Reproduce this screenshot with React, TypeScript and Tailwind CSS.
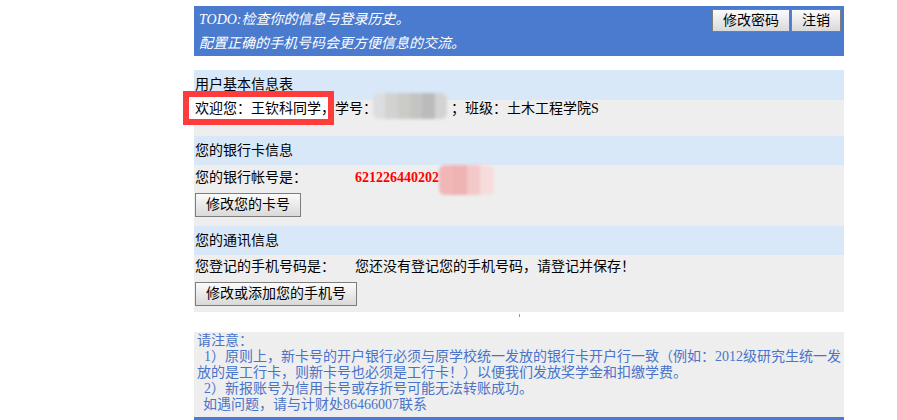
import type { ReactNode } from "react";
import clsx from "clsx";

const Btn = ({ children, className }: { children: ReactNode; className?: string }) => (
    <button
        className={clsx(
            "border border-[#7d7d7d] bg-linear-to-b from-[#fbfbfb] to-[#d9d9d9] px-[10px] text-[14px] text-black",
            className
        )}
    >
        {children}
    </button>
);

// mosaic used to hide private numbers
const Mosaic = ({ colors, className }: { colors: string[]; className: string }) => (
    <span className={clsx("absolute flex overflow-hidden rounded-[6px] blur-[1.5px]", className)}>
        {colors.map((c, i) => (
            <span key={i} className="h-full flex-1" style={{ backgroundColor: c }} />
        ))}
    </span>
);

export default function App() {
    return (
        <div className="min-h-[420px] bg-white font-['Liberation_Serif','Noto_Sans_CJK_SC',serif] text-[14px] text-black">
            <div className="ml-[194px] w-[650px] pt-[6px]">
                {/* top bar */}
                <div className="flex h-[50px] justify-between bg-[#4b7bce]">
                    <div className="pl-[5px] pt-[2px] italic leading-[24px] text-white">
                        <div>TODO:检查你的信息与登录历史。</div>
                        <div>配置正确的手机号码会更方便信息的交流。</div>
                    </div>
                    <div className="flex items-start gap-[1px] pr-[3px] pt-[3px]">
                        <Btn className="h-[23px] leading-[20px]">修改密码</Btn>
                        <Btn className="h-[23px] leading-[20px]">注销</Btn>
                    </div>
                </div>

                <div className="h-[14px]" />

                {/* basic info */}
                <div className="relative">
                    <div className="h-[30px] bg-[#d8e8f8] pl-px leading-[30px]">用户基本信息表</div>
                    <div className="h-[36px] bg-[#eeeeee] pl-px leading-[18px]">
                        <div className="relative z-10 whitespace-nowrap">
                            欢迎您：王钦科同学，学号：
                            <span className="relative inline-block h-[18px] w-[74px] align-top">
                                <Mosaic
                                    className="-top-[7px] -bottom-[1px] -left-[4px] right-[4px]"
                                    colors={["#dcdde0", "#d2d2d0", "#cbcbc8", "#c4c4c2", "#bbbbbb", "#d3d3d3"]}
                                />
                            </span>
                            ；班级：土木工程学院S
                        </div>
                    </div>
                    <div className="absolute left-[-11px] top-[21px] h-[34px] w-[151px] border-[6px] border-[#ff3b3b] bg-white" />
                </div>

                {/* bank card */}
                <div className="h-[29px] bg-[#d8e8f8] pl-px leading-[29px]">您的银行卡信息</div>
                <div className="h-[61px] bg-[#eeeeee] pl-px pt-[4px]">
                    <div className="flex leading-[18px]">
                        <div className="w-[160px]">您的银行帐号是：</div>
                        <div className="whitespace-nowrap font-bold text-[#ff0000]">
                            621226440202
                            <span className="relative inline-block h-[18px] w-[55px] align-top">
                                <Mosaic
                                    className="-top-[4px] -bottom-[8px] left-0 right-0"
                                    colors={["#f1b6b6", "#efb3b3", "#f3c8c8", "#f6dcdc"]}
                                />
                            </span>
                        </div>
                    </div>
                    <Btn className="mt-[6px] h-[24px] leading-[22px]">修改您的卡号</Btn>
                </div>

                {/* contact */}
                <div className="h-[29px] bg-[#d8e8f8] pl-px leading-[29px]">您的通讯信息</div>
                <div className="h-[57px] bg-[#eeeeee] pl-px pt-[3px]">
                    <div className="flex leading-[18px]">
                        <div className="w-[160px]">您登记的手机号码是：</div>
                        <div>您还没有登记您的手机号码，请登记并保存！</div>
                    </div>
                    <Btn className="mt-[6px] h-[24px] leading-[22px]">修改或添加您的手机号</Btn>
                </div>

                <div className="h-[20px] pt-[2px]">
                    <div className="ml-[325px] h-[3px] w-px bg-[#9a9a9a]" />
                </div>

                {/* notice */}
                <div className="bg-[#eeeeee] pb-[4px] pl-[3px] pt-[1px] leading-[16px] text-[#4a73c9]">
                    <div>请注意：</div>
                    <div className="whitespace-nowrap pl-[7px]">
                        1）原则上，新卡号的开户银行必须与原学校统一发放的银行卡开户行一致（例如：2012级研究生统一发
                    </div>
                    <div className="whitespace-nowrap">放的是工行卡，则新卡号也必须是工行卡！）以便我们发放奖学金和扣缴学费。</div>
                    <div className="pl-[7px]">2）新报账号为信用卡号或存折号可能无法转账成功。</div>
                    <div className="pl-[6px]">如遇问题，请与计财处86466007联系</div>
                </div>
                <div className="h-[6px] bg-[#4b7bce]" />
            </div>
        </div>
    );
}
